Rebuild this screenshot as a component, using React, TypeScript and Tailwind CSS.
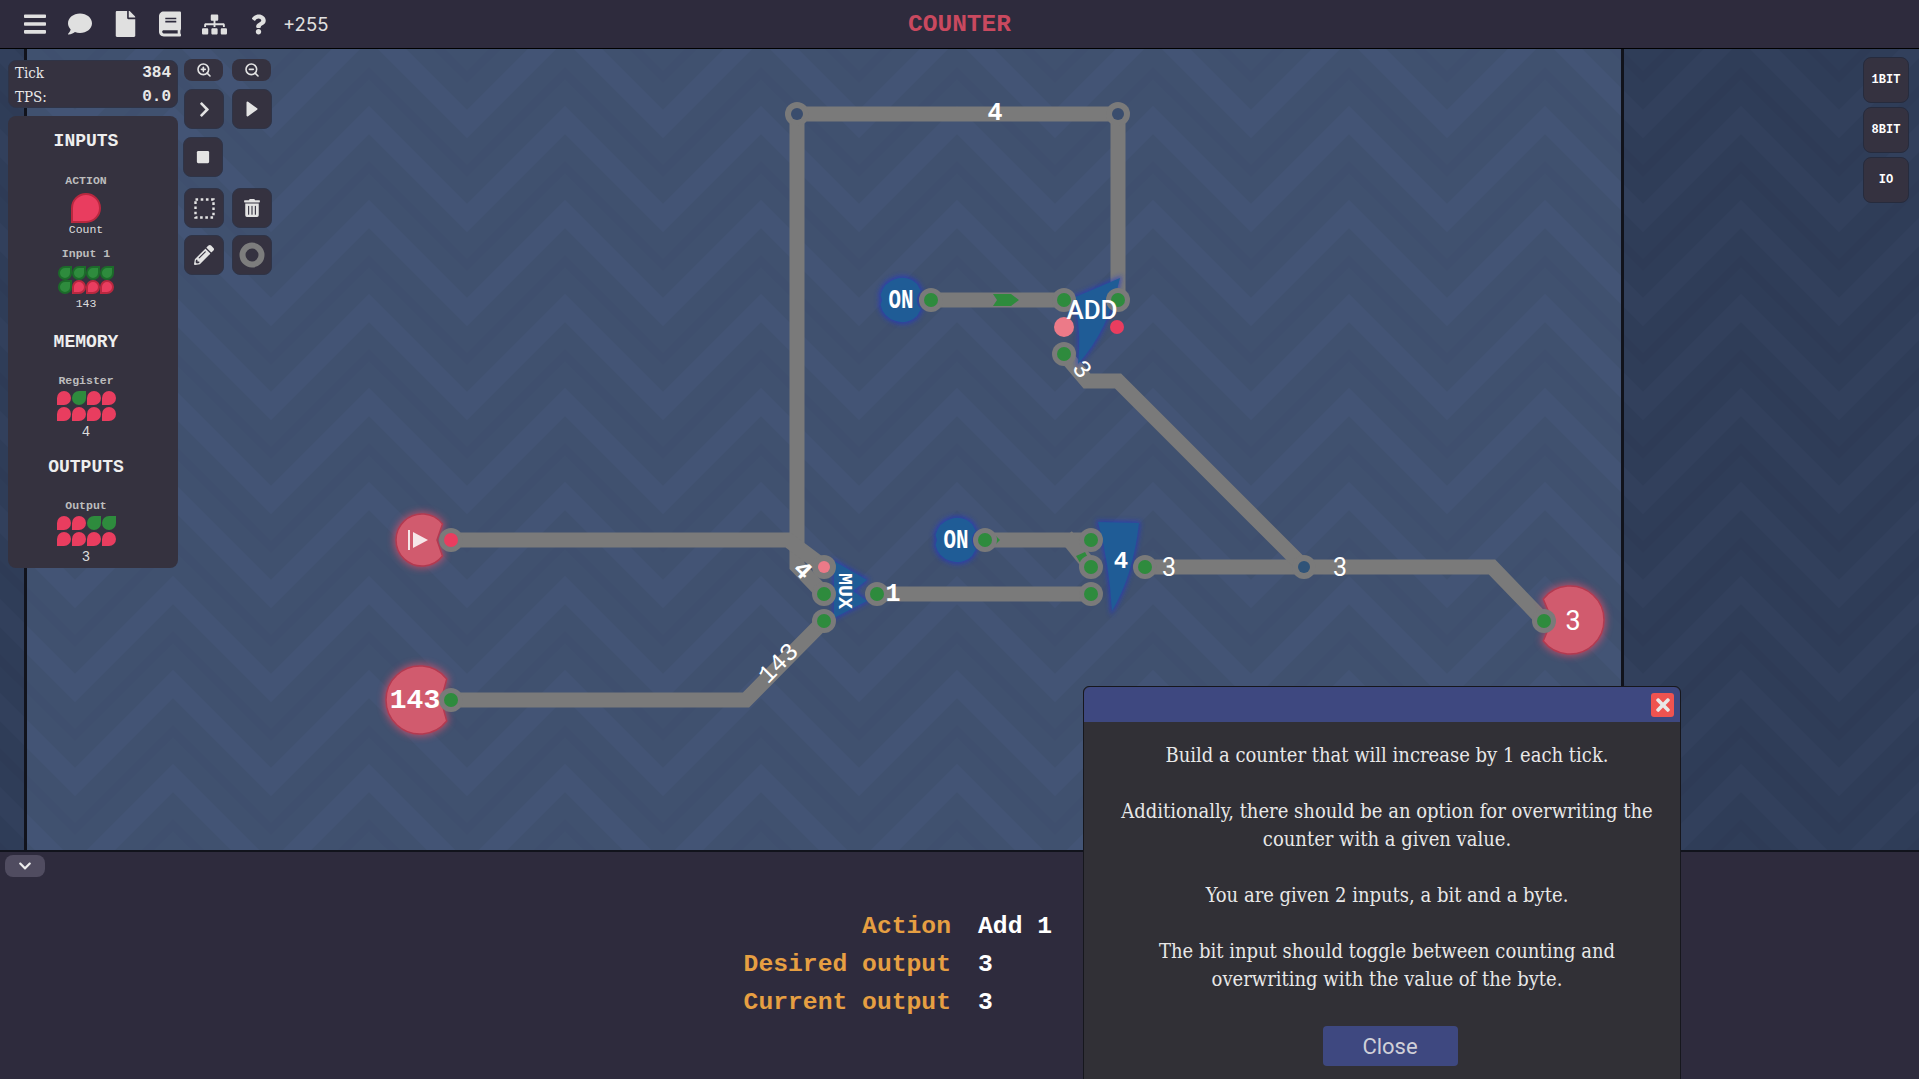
import React from "react";
import { FaBars, FaComment, FaFile, FaBook, FaSitemap, FaQuestion, FaChevronRight, FaStop, FaTrashAlt, FaPencilAlt, FaChevronDown, FaTimes } from "react-icons/fa";
import { ZoomIn, ZoomOut } from "lucide-react";

const MONO = "font-['Liberation_Mono',monospace]";
const SLAB = "font-['DejaVu_Serif_Condensed','DejaVu_Serif',serif]";

const WIRE = "#7a7a7a";
const GREEN = "#2e8b3d";
const RED = "#e93d5f";
const PINK = "#ec7a88";
const BLUE = "#1f5c96";
const FONT_M = "'Liberation Mono', monospace";
const FONT_S = "Roboto, 'Liberation Sans', sans-serif";

function Wire({ d }: { d: string }) {
  return <path d={d} fill="none" stroke={WIRE} strokeWidth={15} strokeLinejoin="miter" />;
}

function Node({ x, y, c = GREEN, r = 7 }: { x: number; y: number; c?: string; r?: number }) {
  return (
    <g>
      <circle cx={x} cy={y} r={12} fill={WIRE} />
      <circle cx={x} cy={y} r={r} fill={c} />
    </g>
  );
}

function Label({ x, y, t, rot = 0, size = 25, weight = 400, font = FONT_M }: { x: number; y: number; t: string; rot?: number; size?: number; weight?: number; font?: string }) {
  return (
    <text
      x={x}
      y={y}
      fill="#fff"
      fontFamily={font}
      fontSize={size}
      fontWeight={weight}
      textAnchor="middle"
      dominantBaseline="central"
      transform={rot ? `rotate(${rot} ${x} ${y})` : undefined}
    >
      {t}
    </text>
  );
}

function Pac({ cx, cy, r, d, apex, half }: { cx: number; cy: number; r: number; d: 1 | -1; apex: number; half: number }) {
  const rimX = cx + d * Math.sqrt(r * r - half * half);
  const path = `M${rimX} ${cy - half} A${r} ${r} 0 1 ${d === 1 ? 0 : 1} ${rimX} ${cy + half} L${cx + d * apex} ${cy} Z`;
  return (
    <g>
      <path d={path} fill="#f0506a" stroke="#f0506a" strokeWidth={5} opacity={0.6} filter="url(#glowR)" />
      <path d={path} fill="#d15b6e" stroke="#b23a50" strokeWidth={1.5} />
    </g>
  );
}

function OnGate({ cx, cy }: { cx: number; cy: number }) {
  const d = `M${cx + 15} ${cy - 16} L${cx + 19} ${cy - 9} A12 12 0 0 0 ${cx + 19} ${cy + 9} L${cx + 15} ${cy + 16} A22 22 0 0 1 ${cx - 21.5} ${cy + 5} L${cx - 20} ${cy} L${cx - 21.5} ${cy - 5} A22 22 0 0 1 ${cx + 15} ${cy - 16} Z`;
  return (
    <g>
      <path d={d} fill="#2438c8" stroke="#2438c8" strokeWidth={4} opacity={0.7} filter="url(#glowB)" />
      <path d={d} fill={BLUE} />
      <text x={cx - 1} y={cy + 1} fill="#fff" fontFamily={FONT_M} fontSize={27} fontWeight={700} textLength={25} lengthAdjust="spacingAndGlyphs" textAnchor="middle" dominantBaseline="central">ON</text>
    </g>
  );
}

function Blue({ d }: { d: string }) {
  return (
    <g>
      <path d={d} fill="#2438c8" stroke="#2438c8" strokeWidth={3} opacity={0.7} filter="url(#glowB)" />
      <path d={d} fill={BLUE} />
    </g>
  );
}

function Zig({ id, base, light, dark }: { id: string; base: string; light: string; dark: string }) {
  const rows = (ks: number[]) =>
    ks.map((k) => `M-8 ${47 * k + 106} L98 ${47 * k} L204 ${47 * k + 106}`).join(" ");
  return (
    <pattern id={id} width="196" height="94" patternUnits="userSpaceOnUse" x="75" y="26">
      <rect width="196" height="94" fill={base} />
      <path d={rows([-4, -2, 0, 2])} fill="none" stroke={light} strokeWidth="20" />
      <path d={rows([-3, -1, 1])} fill="none" stroke={dark} strokeWidth="9" />
    </pattern>
  );
}

function Background() {
  return (
    <svg className="absolute inset-0 h-full w-full" viewBox="0 49 1919 801" preserveAspectRatio="none">
      <defs>
        <Zig id="zigD" base="#2f3d58" light="#32405c" dark="#2e3b56" />
        <Zig id="zigL" base="#40516f" light="#435475" dark="#3f4f6e" />
      </defs>
      <rect x="0" y="49" width="1919" height="801" fill="url(#zigD)" />
      <rect x="27" y="49" width="1594" height="801" fill="url(#zigL)" />
      <rect x="24" y="49" width="3" height="801" fill="#11131c" />
      <rect x="1621" y="49" width="3" height="801" fill="#11131c" />
    </svg>
  );
}

function Diagram() {
  return (
    <svg className="absolute inset-0 h-full w-full" viewBox="0 48 1919 801" preserveAspectRatio="none">
      <defs>
        <filter id="glowR" x="-30%" y="-30%" width="160%" height="160%"><feGaussianBlur stdDeviation="3.5" /></filter>
        <filter id="glowB" x="-30%" y="-30%" width="160%" height="160%"><feGaussianBlur stdDeviation="2.5" /></filter>
      </defs>

      <Wire d="M824 593 L797 565 L797 113 L1118 113 L1118 299" />
      <Wire d="M451 539 L788 539 L824 566" />
      <Wire d="M451 699 L746 699 L824 620" />
      <Wire d="M877 593 L1091 593" />
      <Wire d="M985 539 L1091 539" />
      <Wire d="M1066 535 L1091 566" />
      <Wire d="M1145 566 L1492 566 L1544 620" />
      <Wire d="M931 299 L1064 299" />
      <Wire d="M1064 353 L1087 380 L1118 380 L1304 566" />

      <path d="M993 293 L1011 293 L1019 299 L1011 305 L993 305 L997 299 Z" fill={GREEN} />
      <path d="M994 533 L1000 539 L994 545 Z" fill={GREEN} />
      <path d="M1076 555 L1085 551 L1091 562 L1082 565 Z" fill={GREEN} />

      <Pac cx={422} cy={539} r={26} d={1} apex={15} half={16} />
      <path d="M409 529 V549" stroke="#f6e6e8" strokeWidth={2} />
      <path d="M413 531 L428 539 L413 547 Z" fill="#f6e6e8" />
      <Pac cx={420} cy={699} r={34} d={1} apex={21} half={21} />
      <Pac cx={1570} cy={619} r={34} d={-1} apex={18} half={21} />

      <OnGate cx={902} cy={299} />
      <OnGate cx={957} cy={539} />

      <Blue d="M834 560 L867 579 L853 590 L867 600 L834 617 Z" />
      <Blue d="M1098 521 L1139 522 Q1133 575 1112 610 Q1109 560 1098 521 Z" />
      <Blue d="M1073 297 L1120 277 Q1108 330 1078 363 Q1082 325 1073 297 Z" />

      <Node x={931} y={299} />
      <Node x={1064} y={299} />
      <Node x={1118} y={299} />
      <Node x={1064} y={353} />
      <circle cx={1064} cy={326} r={10} fill={PINK} />
      <circle cx={1117} cy={326} r={7} fill={RED} />
      <Node x={985} y={539} />
      <Node x={1091} y={539} />
      <Node x={1091} y={566} />
      <Node x={1091} y={593} />
      <Node x={1145} y={566} />
      <Node x={877} y={593} />
      <Node x={824} y={566} c={PINK} r={6} />
      <Node x={824} y={593} />
      <Node x={824} y={620} />
      <Node x={451} y={539} c={RED} />
      <Node x={451} y={699} />
      <Node x={1544} y={620} />
      <Node x={1304} y={566} c="#2f5378" r={6} />
      <Node x={797} y={113} c="#3a4d6d" r={6} />
      <Node x={1118} y={113} c="#3a4d6d" r={6} />

      <Label x={995} y={112} t="4" weight={700} />
      <Label x={1092} y={309} t="ADD" size={26} weight={500} font={FONT_S} />
      <Label x={1081} y={369} t="3" rot={50} />
      <Label x={893} y={593} t="1" weight={700} />
      <Label x={802} y={570} t="4" rot={45} weight={700} />
      <Label x={779} y={663} t="143" rot={-45} size={25} />
      <Label x={844} y={590} t="MUX" rot={90} size={20} weight={700} />
      <Label x={1121} y={560} t="4" weight={700} size={24} />
      <Label x={1169} y={566} t="3" size={25} font={FONT_S} />
      <Label x={1340} y={566} t="3" size={25} font={FONT_S} />
      <Label x={1573} y={620} t="3" size={27} font={FONT_S} />
      <Label x={415} y={699} t="143" size={28} weight={700} />
    </svg>
  );
}

function Tool({ children, className = "" }: { children?: React.ReactNode; className?: string }) {
  return (
    <div className={`flex h-10 w-10 items-center justify-center rounded-lg border border-[#2f3447] bg-[#353240] text-[#e4e4e4] ${className}`}>
      {children}
    </div>
  );
}

function Cell({ on, border }: { on: boolean; border: boolean }) {
  const shape = on ? "rounded-[7px] rounded-tr-none" : "rounded-[7px] rounded-bl-none";
  const color = on ? "bg-[#2e8b3d]" : "bg-[#e93d5f]";
  const edge = border ? (on ? "border-2 border-[#1c6b2a]" : "border-2 border-[#b8283f]") : "";
  return <div className={`h-[14px] w-[14px] ${shape} ${color} ${edge}`} />;
}

function Bits({ bits, border = false }: { bits: number[]; border?: boolean }) {
  return (
    <div className={`grid grid-cols-[repeat(4,14px)] ${border ? "gap-0" : "gap-x-px gap-y-[2px]"}`}>
      {bits.map((b, i) => (
        <Cell key={i} on={b === 1} border={border} />
      ))}
    </div>
  );
}

function Title({ t, className }: { t: string; className: string }) {
  return <div className={`h-6 text-[18px] font-bold leading-6 text-[#eeeeee] ${className}`}>{t}</div>;
}

function Small({ t, className }: { t: string; className: string }) {
  return <div className={`h-[14px] text-[11.5px] font-bold leading-[14px] text-[#bdbdbd] ${className}`}>{t}</div>;
}

function Value({ t, className }: { t: string; className: string }) {
  return <div className={`text-[14px] leading-4 text-[#dddddd] ${className}`}>{t}</div>;
}

function SidePanel() {
  return (
    <div className={`flex h-[452px] w-[170px] flex-col items-center rounded-lg bg-[#35323f] pr-[14px] pt-[13px] ${MONO}`}>
      <Title t="INPUTS" className="" />
      <Small t="ACTION" className="mt-[21px]" />
      <div className="mt-[5px] h-[30px] w-[30px] rounded-full rounded-bl-none border-2 border-[#b8283f] bg-[#e93d5f]" />
      <div className="h-[14px] text-[11.5px] leading-[14px] text-[#dddddd]">Count</div>
      <Small t="Input 1" className="mt-[10px]" />
      <div className="mt-[5px]"><Bits bits={[1, 1, 1, 1, 1, 0, 0, 0]} border /></div>
      <div className="mt-[3px] h-[14px] text-[11.5px] leading-[14px] text-[#dddddd]">143</div>
      <Title t="MEMORY" className="mt-[19px]" />
      <Small t="Register" className="mt-5" />
      <div className="mt-[3px]"><Bits bits={[0, 1, 0, 0, 0, 0, 0, 0]} /></div>
      <Value t="4" className="mt-[3px]" />
      <Title t="OUTPUTS" className="mt-[15px]" />
      <Small t="Output" className="mt-5" />
      <div className="mt-[3px]"><Bits bits={[0, 0, 1, 1, 0, 0, 0, 0]} /></div>
      <Value t="3" className="mt-[3px]" />
    </div>
  );
}

function TopBar() {
  return (
    <header className="relative flex h-[49px] shrink-0 items-center border-b border-black bg-[#2e2b3d] pl-6 text-[#e0e0e0]">
      <FaBars className="h-[26px] w-[22px]" />
      <FaComment className="ml-[22px] h-[24px] w-[24px]" />
      <FaFile className="ml-[22px] h-[26px] w-[23px]" />
      <FaBook className="ml-[22px] h-[26px] w-[22px]" />
      <FaSitemap className="ml-[21px] h-[23px] w-[25px]" />
      <FaQuestion className="ml-[24px] h-[23px] w-[15px]" />
      <span className="ml-[17px] pt-[2px] font-['Inter',sans-serif] text-[18.5px]">+255</span>
      <div className={`absolute inset-x-0 top-[13px] text-center text-[24.5px] font-bold leading-none text-[#c9495f] ${MONO}`}>COUNTER</div>
    </header>
  );
}

function Toolbar() {
  return (
    <div className="ml-[6px] flex w-[88px] flex-col">
      <div className="-mt-px flex gap-2">
        <div className="flex h-[22px] w-[39px] items-center justify-center rounded-lg bg-[#353240] text-[#e4e4e4]"><ZoomIn size={16} strokeWidth={2.4} /></div>
        <div className="ml-px flex h-[22px] w-[39px] items-center justify-center rounded-lg bg-[#353240] text-[#e4e4e4]"><ZoomOut size={16} strokeWidth={2.4} /></div>
      </div>
      <div className="mt-2 flex gap-2">
        <Tool><FaChevronRight size={17} /></Tool>
        <Tool>
          <svg width="12" height="16" viewBox="0 0 12 16" fill="#e4e4e4" stroke="#e4e4e4" strokeWidth="2" strokeLinejoin="round">
            <path d="M1.5 1.5 L10.5 8 L1.5 14.5 Z" />
          </svg>
        </Tool>
      </div>
      <Tool className="mt-2 -ml-px"><FaStop size={14} /></Tool>
      <div className="mt-[11px] flex gap-2">
        <Tool>
          <svg width="21" height="21" viewBox="0 0 21 21" fill="none" stroke="#e4e4e4" strokeWidth="2.4" strokeDasharray="2.6 2.6">
            <rect x="1.5" y="1.5" width="18" height="18" />
          </svg>
        </Tool>
        <Tool><FaTrashAlt size={18} /></Tool>
      </div>
      <div className="mt-[7px] flex gap-2">
        <Tool><FaPencilAlt size={20} /></Tool>
        <Tool>
          <svg width="26" height="26" viewBox="0 0 26 26" fill="none" stroke="#7d7d7d" strokeWidth="6">
            <circle cx="13" cy="13" r="9.5" />
          </svg>
        </Tool>
      </div>
    </div>
  );
}

function Modal() {
  return (
    <div className="absolute left-[1083px] top-[686px] z-10 h-[420px] w-[598px] rounded-t-md border border-[#16171d] bg-[#313036]">
      <div className="flex h-[35px] items-center justify-end rounded-t-md bg-[#3e4880] pr-[6px]">
        <div className="flex h-6 w-[23px] items-center justify-center rounded-[3px] bg-[#ef5350] text-[#e8e8e8]">
          <FaTimes size={20} />
        </div>
      </div>
      <div className={`pl-[10px] pt-[19px] text-center text-[20px] leading-7 text-[#e8e8e8] ${SLAB}`}>
        <p>Build a counter that will increase by 1 each tick.</p>
        <p className="mt-7">Additionally, there should be an option for overwriting the<br />counter with a given value.</p>
        <p className="mt-7">You are given 2 inputs, a bit and a byte.</p>
        <p className="mt-7">The bit input should toggle between counting and<br />overwriting with the value of the byte.</p>
      </div>
      <div className="mt-[33px] flex justify-center pl-4">
        <div className="flex h-10 w-[135px] items-center justify-center rounded bg-[#3e4880] font-['Roboto',sans-serif] text-[22px] text-[#d0d0d8]">Close</div>
      </div>
    </div>
  );
}

function Bottom() {
  const rows = [
    ["Action", "Add 1"],
    ["Desired output", "3"],
    ["Current output", "3"],
  ];
  return (
    <section className="relative flex-1 border-t-2 border-[#11131c] bg-[#2e2b3d]">
      <div className="ml-[5px] mt-[3px] flex h-[22px] w-10 items-center justify-center rounded-lg bg-[#504c60] text-[#eeeeee]">
        <FaChevronDown size={14} />
      </div>
      <div className={`ml-[742px] mt-[30px] grid w-[400px] grid-cols-[209px_1fr] gap-x-[27px] text-[24.7px] font-bold leading-[38px] ${MONO}`}>
        {rows.map(([a, b]) => (
          <React.Fragment key={a}>
            <div className="text-right text-[#e69f42]">{a}</div>
            <div className="text-white">{b}</div>
          </React.Fragment>
        ))}
      </div>
    </section>
  );
}

export default function App() {
  return (
    <div className="relative flex h-[1079px] w-[1919px] flex-col overflow-hidden bg-[#2e2b3d]">
      <TopBar />
      <main className="relative h-[801px] shrink-0 overflow-hidden">
        <Background />
        <Diagram />
        <div className="absolute inset-0 flex justify-between pl-2 pr-[10px] pt-[8px]">
          <div className="flex">
            <div className="flex flex-col gap-2 pt-[3px]">
              <div className="flex h-[48px] w-[170px] flex-col justify-center rounded-lg border border-[#2f3447] bg-[#353240] px-[6px] pt-[2px] text-[#e8e8e8]">
                <div className="flex items-center justify-between leading-6">
                  <span className={`text-[15px] ${SLAB}`}>Tick</span>
                  <span className={`text-[16px] font-bold ${MONO}`}>384</span>
                </div>
                <div className="flex items-center justify-between leading-6">
                  <span className={`text-[15px] ${SLAB}`}>TPS:</span>
                  <span className={`text-[16px] font-bold ${MONO}`}>0.0</span>
                </div>
              </div>
              <SidePanel />
            </div>
            <div className="pt-[3px]"><Toolbar /></div>
          </div>
          <div className={`flex flex-col gap-1 text-[12px] font-bold text-white ${MONO}`}>
            {["1BIT", "8BIT", "IO"].map((t) => (
              <div key={t} className="flex h-[46px] w-[46px] items-center justify-center rounded-lg border border-[#262b3d] bg-[#353240]">{t}</div>
            ))}
          </div>
        </div>
      </main>
      <Bottom />
      <Modal />
    </div>
  );
}
